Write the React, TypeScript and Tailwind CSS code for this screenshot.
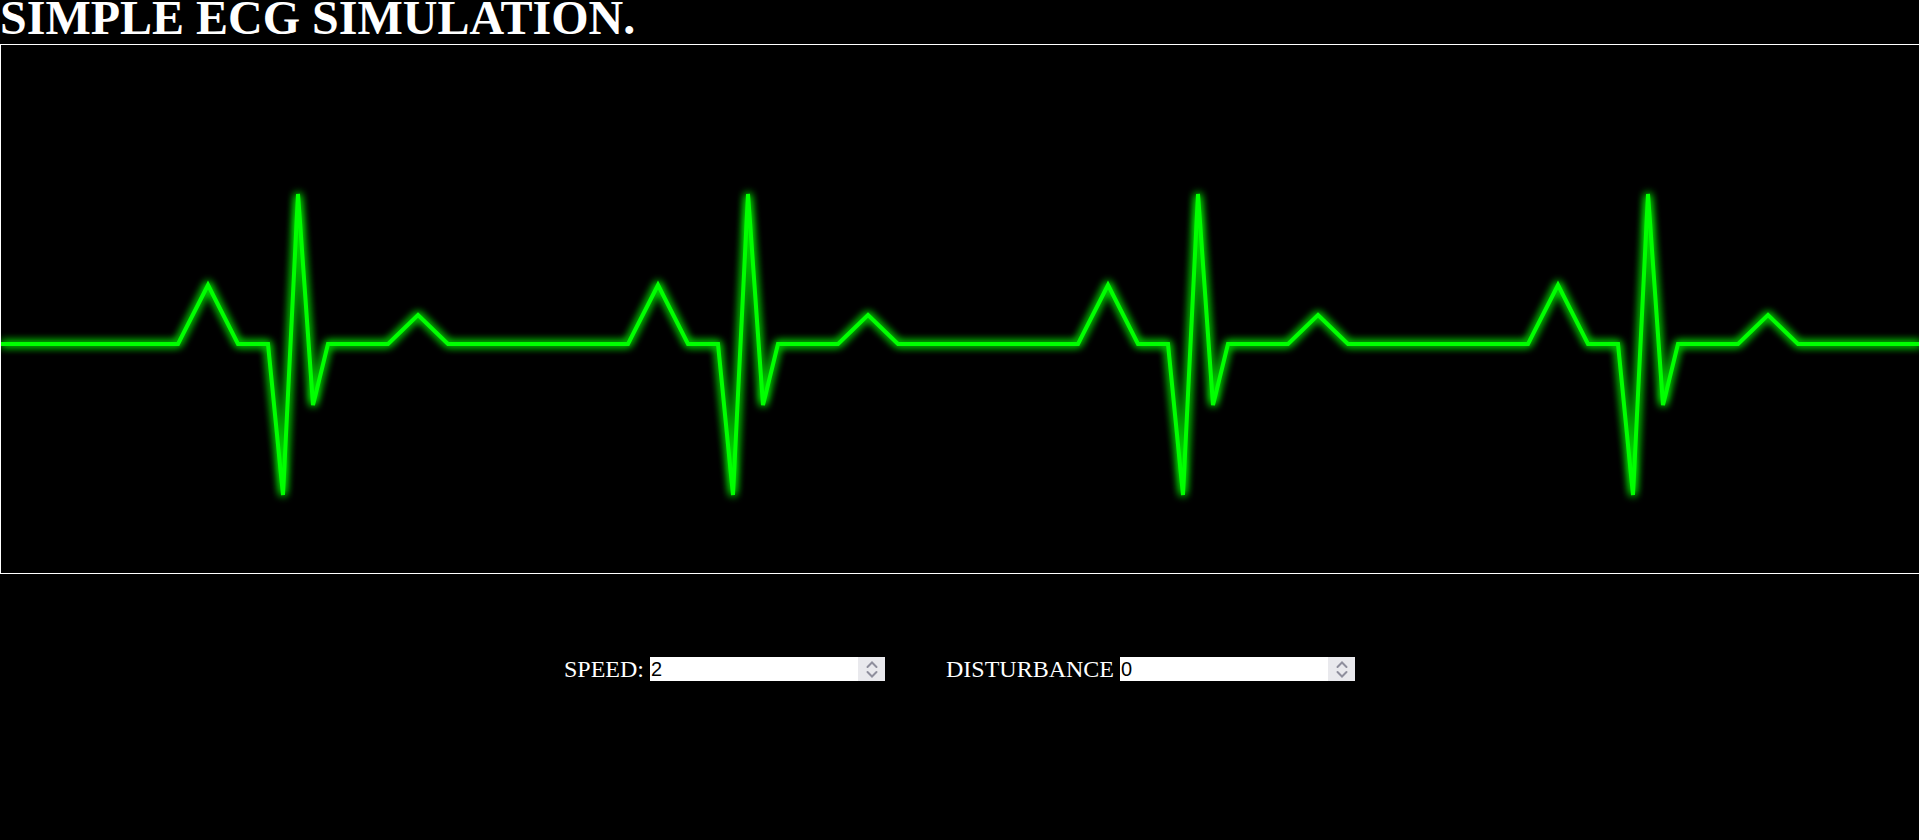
const BASE = 299;
const PERIOD = 450;

// one heartbeat, offsets from the start of the P wave
const BEAT: [number, number][] = [
  [0, 0],
  [30, -59],
  [60, 0],
  [90, 0],
  [105, 151],
  [120, -150],
  [135, 61],
  [150, 0],
  [210, 0],
  [240, -29],
  [270, 0],
];

function ecgPath() {
  const pts: string[] = [`M0 ${BASE}`];
  for (let s = 177; s < 1920; s += PERIOD) {
    for (const [dx, dy] of BEAT) pts.push(`L${s + dx} ${BASE + dy}`);
  }
  pts.push(`L1920 ${BASE}`);
  return pts.join(' ');
}

function NumberField({ value }: { value: string }) {
  return (
    <span className="inline-flex h-[24px] w-[235px] items-stretch bg-white">
      <input
        type="text"
        defaultValue={value}
        className="min-w-0 flex-1 bg-transparent pl-px text-[20px] leading-[24px] text-black outline-none"
        style={{ fontFamily: '"Liberation Sans", Arial, sans-serif' }}
      />
      <span className="flex w-[27px] flex-col items-center justify-center gap-[1px] bg-[#e9e9ed]">
        <svg width="14" height="9" viewBox="0 0 14 9">
          <path d="M2.5 7 L7 2.5 L11.5 7" fill="none" stroke="#8f8f9d" strokeWidth="2" strokeLinecap="round" />
        </svg>
        <svg width="14" height="9" viewBox="0 0 14 9">
          <path d="M2.5 2 L7 6.5 L11.5 2" fill="none" stroke="#8f8f9d" strokeWidth="2" strokeLinecap="round" />
        </svg>
      </span>
    </span>
  );
}

export default function App() {
  const d = ecgPath();
  return (
    <div
      className="min-h-screen w-full overflow-hidden bg-black text-white"
      style={{ fontFamily: '"Liberation Serif", "Times New Roman", serif' }}
    >
      <h1 className="mb-[8px] h-[36px] whitespace-nowrap text-[48px] font-bold leading-[36px]">
        SIMPLE ECG SIMULATION.
      </h1>

      <div className="h-[530px] w-[1922px] border border-white bg-black">
        <svg width="1920" height="528" viewBox="0 0 1920 528" className="block">
          <defs>
            <filter id="glow" x="-5%" y="-20%" width="110%" height="140%">
              <feGaussianBlur in="SourceGraphic" stdDeviation="4" result="blur" />
              <feMerge>
                <feMergeNode in="blur" />
                <feMergeNode in="blur" />
                <feMergeNode in="SourceGraphic" />
              </feMerge>
            </filter>
          </defs>
          <path d={d} fill="none" stroke="#00ff00" strokeWidth="4" strokeLinejoin="miter" filter="url(#glow)" />
        </svg>
      </div>

      <div className="mt-[81px] flex h-[28px] items-center justify-center gap-[61px] text-[24px]">
        <label className="flex items-center gap-[6px]">
          <span>SPEED:</span>
          <NumberField value="2" />
        </label>
        <label className="flex items-center gap-[6px]">
          <span>DISTURBANCE</span>
          <NumberField value="0" />
        </label>
      </div>
    </div>
  );
}
